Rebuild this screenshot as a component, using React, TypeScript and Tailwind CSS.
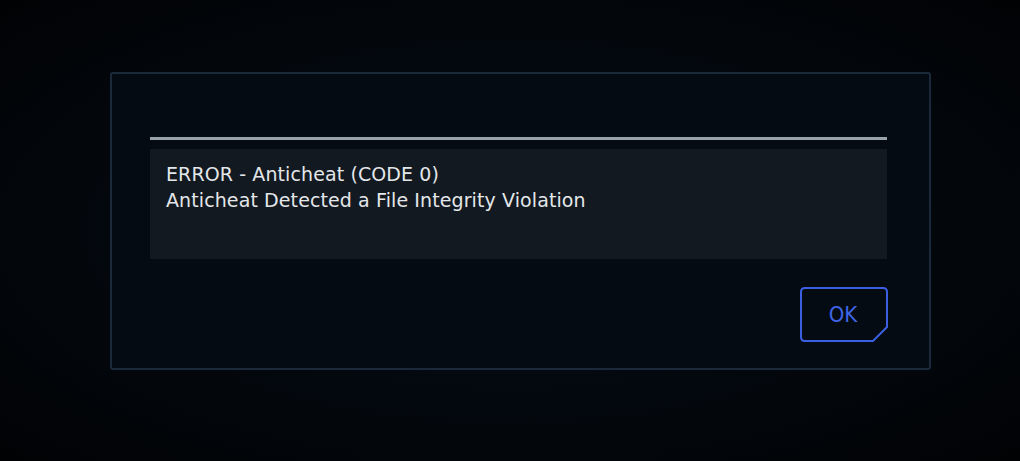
export default function App() {
  return (
    <div className="w-[1020px] h-[461px] bg-[radial-gradient(ellipse_at_center,#07101a_0%,#03070c_60%,#010204_100%)] flex items-start pl-[110px] pt-[72px]" style={{ fontFamily: '"DejaVu Sans", Arial, sans-serif' }}>
      <div className="w-[821px] h-[298px] border-2 border-[#1b2a3a] rounded-[3px] bg-[#050b13] flex flex-col px-[38px] pt-[63px]">
        <div className="h-[3px] bg-[#98a2aa] w-[737px]" />
        <div className="mt-[9px] w-[737px] h-[110px] bg-[#131920] px-[16px] pt-[12px] text-[19px] tracking-[0.1px] leading-[26px] text-[#e4e7ea]">
          <div>ERROR - Anticheat (CODE 0)</div>
          <div>Anticheat Detected a File Integrity Violation</div>
        </div>
        <div className="flex justify-end w-[738px] mt-[28px]">
          <button className="relative w-[88px] h-[55px] flex items-center justify-center text-[#3f64e6] text-[22px] pr-[2px]" style={{ fontFamily: '"DejaVu Sans Condensed", "DejaVu Sans", sans-serif' }}>
            <svg className="absolute inset-0" width="88" height="55" viewBox="0 0 88 55">
              <path d="M5 1 H83 Q87 1 87 5 V40 L73 54 H5 Q1 54 1 50 V5 Q1 1 5 1 Z" fill="none" stroke="#3a5fe0" strokeWidth="2" />
            </svg>
            <span className="relative">OK</span>
          </button>
        </div>
      </div>
    </div>
  );
}
